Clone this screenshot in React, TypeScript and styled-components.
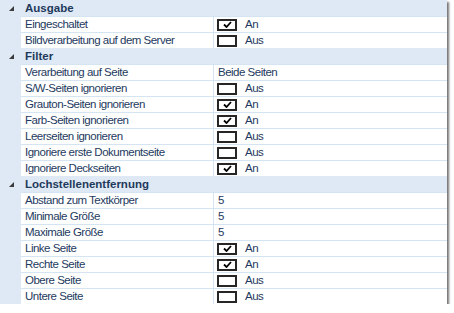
import React from 'react';
import styled, { createGlobalStyle } from 'styled-components';

type Row =
  | { kind: 'check'; label: string; on: boolean }
  | { kind: 'text'; label: string; value: string };

type Category = { title: string; rows: Row[] };

const categories: Category[] = [
  {
    title: 'Ausgabe',
    rows: [
      { kind: 'check', label: 'Eingeschaltet', on: true },
      { kind: 'check', label: 'Bildverarbeitung auf dem Server', on: false },
    ],
  },
  {
    title: 'Filter',
    rows: [
      { kind: 'text', label: 'Verarbeitung auf Seite', value: 'Beide Seiten' },
      { kind: 'check', label: 'S/W-Seiten ignorieren', on: false },
      { kind: 'check', label: 'Grauton-Seiten ignorieren', on: true },
      { kind: 'check', label: 'Farb-Seiten ignorieren', on: true },
      { kind: 'check', label: 'Leerseiten ignorieren', on: false },
      { kind: 'check', label: 'Ignoriere erste Dokumentseite', on: false },
      { kind: 'check', label: 'Ignoriere Deckseiten', on: true },
    ],
  },
  {
    title: 'Lochstellenentfernung',
    rows: [
      { kind: 'text', label: 'Abstand zum Textkörper', value: '5' },
      { kind: 'text', label: 'Minimale Größe', value: '5' },
      { kind: 'text', label: 'Maximale Größe', value: '5' },
      { kind: 'check', label: 'Linke Seite', on: true },
      { kind: 'check', label: 'Rechte Seite', on: true },
      { kind: 'check', label: 'Obere Seite', on: false },
      { kind: 'check', label: 'Untere Seite', on: false },
    ],
  },
];

const GlobalStyle = createGlobalStyle`
  body {
    margin: 0;
    background: #ffffff;
    font-family: "Liberation Sans", Arial, sans-serif;
    font-size: 11.5px;
    letter-spacing: -0.5px;
    color: #1e3a60;
  }
`;

const App = () => {
  return (
    <>
      <GlobalStyle />
      <Grid>
        {categories.map((cat) => (
          <React.Fragment key={cat.title}>
            <CategoryRow>
              <Gutter>
                <svg width='5' height='5' viewBox='0 0 5 5'>
                  <polygon points='5,0 5,5 0,5' fill='#3b3b3b' />
                </svg>
              </Gutter>
              <CategoryTitle>{cat.title}</CategoryTitle>
            </CategoryRow>
            {cat.rows.map((row) => (
              <PropRow key={row.label}>
                <Gutter />
                <LabelCell>{row.label}</LabelCell>
                <ValueCell>
                  {row.kind === 'check' ? (
                    <>
                      <CheckBox>
                        {row.on && (
                          <svg width='9' height='7' viewBox='0 0 9 7'>
                            <path d='M1 3.5 L3.5 6 L8 1' stroke='#000' strokeWidth='1.8' fill='none' />
                          </svg>
                        )}
                      </CheckBox>
                      <CheckText>{row.on ? 'An' : 'Aus'}</CheckText>
                    </>
                  ) : (
                    <PlainValue>{row.value}</PlainValue>
                  )}
                </ValueCell>
              </PropRow>
            ))}
          </React.Fragment>
        ))}
      </Grid>
    </>
  );
};
export default App;

const Grid = styled.div`
  width: 447px;
  display: flex;
  flex-direction: column;
  background-color: #dfe9f5;
  box-shadow: 2px 2px 2px rgba(0, 0, 0, 0.55);
`;

const CategoryRow = styled.div`
  height: 16px;
  display: flex;
  align-items: center;
`;

const Gutter = styled.div`
  width: 21px;
  flex: 0 0 21px;
  height: 100%;
  display: flex;
  align-items: center;
  justify-content: center;
  padding-left: 1px;
  box-sizing: border-box;
`;

const CategoryTitle = styled.div`
  font-weight: bold;
  font-size: 11.5px;
  letter-spacing: 0;
  padding-left: 4px;
  color: #1e395b;
`;

const PropRow = styled.div`
  height: 16px;
  display: flex;
`;

const LabelCell = styled.div`
  width: 193px;
  background: #ffffff;
  border-top: 1px solid #d5e4f2;
  border-right: 1px solid #d5e4f2;
  padding-left: 4px;
  box-sizing: border-box;
  line-height: 15px;
  white-space: nowrap;
  overflow: hidden;
`;

const ValueCell = styled.div`
  flex: 1;
  background: #ffffff;
  border-top: 1px solid #d5e4f2;
  display: flex;
  align-items: center;
  padding-left: 3px;
  box-sizing: border-box;
`;

const CheckBox = styled.div`
  width: 20px;
  height: 12px;
  border: 2px solid #262626;
  box-sizing: border-box;
  background: #ffffff;
  display: flex;
  align-items: center;
  padding-left: 4px;
`;

const CheckText = styled.span`
  margin-left: 8px;
  line-height: 15px;
`;

const PlainValue = styled.span`
  line-height: 15px;
  padding-left: 1px;
`;
